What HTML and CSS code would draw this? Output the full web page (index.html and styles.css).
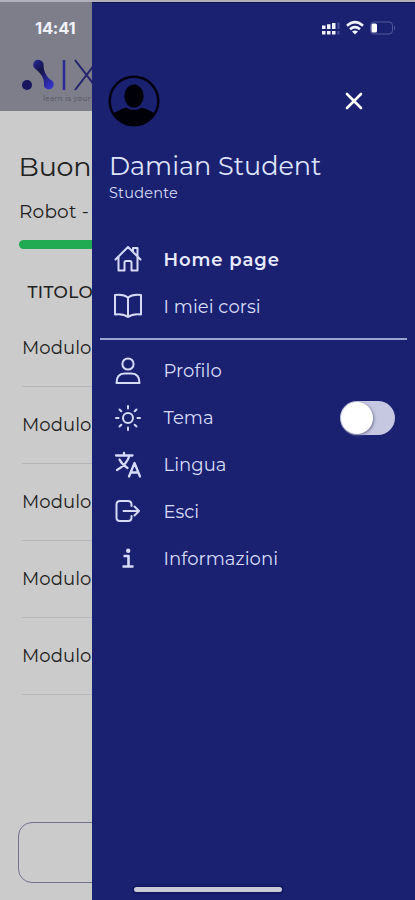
FILE: index.html
```html
<!DOCTYPE html>
<html lang="it">
<head>
<meta charset="utf-8">
<meta name="viewport" content="width=device-width">
<title>Menu</title>
<link rel="stylesheet" href="styles.css">
</head>
<body>
<div class="screen">
  <main class="page">
    <header class="page-header">
      <div class="clock">14:41</div>
      <svg class="logo" width="100" height="34" viewBox="0 0 100 34">
        <defs><linearGradient id="g" x1="0" y1="0" x2="0.7" y2="1"><stop offset="0" stop-color="#27269a"/><stop offset=".42" stop-color="#151449"/><stop offset="1" stop-color="#3432c4"/></linearGradient></defs>
        <circle cx="9" cy="27" r="5" fill="#17165f"/>
        <path d="M21.500 2A5 5 0 0 1 25.500 8Q26 16 32 21.500A5 5 0 1 1 26 28Q27 18 17.500 11A5 5 0 0 1 21.500 2Z" fill="url(#g)"/>
        <path d="M46 2V32" stroke="#2b2a94" stroke-width="2.500"/>
        <path d="M57 2L80 32M80 2L57 32" stroke="#24236f" stroke-width="2"/>
      </svg>
      <div class="tagline">learn is your</div>
    </header>
    <h1 class="greeting">Buon</h1>
    <p class="course">Robot -</p>
    <div class="progress"></div>
    <div class="table-head">TITOLO</div>
    <ul class="modules">
      <li>Modulo</li><li>Modulo</li><li>Modulo</li><li>Modulo</li><li>Modulo</li>
    </ul>
    <div class="action"></div>
  </main>
  <aside class="drawer">
    <div class="status">
      <svg width="75" height="18" viewBox="0 0 75 18">
        <g fill="#f1f2ff"><path d="M0 6.500h3.500v3.500H0zM5 5.300h3.500v4.700H5zM10 4h3.500v6H10zM0 12h3.500v3.500H0zM5 12h3.500v3.500H5zM10 12h3.500v3.500H10z"/></g>
        <path d="M15.500 3.500h2v6.500h-2zM15.500 12h2v3.500h-2z" fill="#4b529d"/>
        <path d="M25 6.700Q33 -.3 41 6.700M28 10.200Q33 6 38 10.200" fill="none" stroke="#f1f2ff" stroke-width="2.600"/>
        <path d="M30 12.500Q33 10.500 36 12.500L33 15.500Z" fill="#f1f2ff"/>
        <rect x="48.500" y="3" width="22" height="12" rx="3.500" fill="none" stroke="#5259a0"/>
        <rect x="49.500" y="4.500" width="5.500" height="9" rx="1.500" fill="#fff"/>
        <path d="M72 6.500q2 2.500 0 5z" fill="#5259a0"/>
      </svg>
    </div>
    <div class="drawer-top">
      <svg width="52" height="52" viewBox="0 0 52 52">
        <defs><clipPath id="a"><circle cx="26" cy="26" r="24.500"/></clipPath></defs>
        <circle cx="26" cy="26" r="24.300" fill="none" stroke="#000010" stroke-width="2.500"/>
        <g fill="#000008" clip-path="url(#a)"><ellipse cx="26" cy="21" rx="9.700" ry="11.500"/><path d="M3 40Q8 36 18 32.500Q26 37.500 34 32.500Q44 36 49 40V52H3Z"/></g>
      </svg>
      <svg class="close" width="20" height="20" viewBox="0 0 20 20"><path d="M3 3L17 17M17 3L3 17" stroke="#fff" stroke-width="2.600" stroke-linecap="round"/></svg>
    </div>
    <div class="name">Damian Student</div>
    <div class="role">Studente</div>
    <nav class="menu">
      <a class="item active"><svg viewBox="0 0 28 28"><path d="M1.500 14.500L14 2L26.500 14.500M4.500 12V25.500H10.500V17.500Q10.500 16 12 16H16Q17.500 16 17.500 17.500V25.500H23.500V12M19 6.500V3H23.500V11"/></svg><span>Home page</span></a>
      <a class="item"><svg viewBox="0 0 28 28"><path d="M14 5.500Q9.500 1.800 1 3V22.500Q9.500 21.500 14 25Q18.500 21.500 27 22.500V3Q18.500 1.800 14 5.500V24"/></svg><span>I miei corsi</span></a>
    </nav>
    <div class="divider"></div>
    <nav class="menu">
      <a class="item"><svg viewBox="0 0 28 28"><circle cx="14" cy="7" r="5.600"/><path d="M2.500 26Q2.500 16.500 10.500 16.500H17.500Q25.500 16.500 25.500 26Z"/></svg><span>Profilo</span></a>
      <div class="item"><svg viewBox="0 0 28 28"><circle cx="14" cy="14" r="5"/><path d="M14 2V4.500M14 23.500V26M2 14H4.500M23.500 14H26M5.500 5.500L7.300 7.300M20.700 20.700L22.500 22.500M22.500 5.500L20.700 7.300M7.300 20.700L5.500 22.500"/></svg><span>Tema</span><span class="toggle"><i></i></span></div>
      <a class="item"><svg viewBox="0 0 28 28"><path stroke-width="2.300" d="M2 4.500H18.500M10 2V4.500M15.500 4.500Q13 13.500 3 19M5.500 8.500Q8 13.500 13.500 17M15 25.500L20.500 12L26 25.500M17 21.500H24"/></svg><span>Lingua</span></a>
      <a class="item"><svg viewBox="0 0 28 28"><path d="M17.500 9V7.500Q17.500 4 14 4H6Q2.500 4 2.500 7.500V20.500Q2.500 24 6 24H14Q17.500 24 17.500 20.500V19M9.500 14H25M20.500 9.500L25 14L20.500 18.500"/></svg><span>Esci</span></a>
      <a class="item"><svg viewBox="0 0 28 28"><path d="M9.500 12H14.500V22.500M8.500 22.500H19.500" stroke-width="2.600" stroke-linecap="butt"/><circle class="dot" cx="14.200" cy="6.700" r="2.200"/></svg><span>Informazioni</span></a>
    </nav>
    <div class="home-bar"></div>
  </aside>
</div>
</body>
</html>
```
FILE: styles.css
```css
* { box-sizing: border-box; }
body { margin: 0; font-family: Montserrat, Inter, "Liberation Sans", sans-serif; background: #cacaca; }
.screen { display: flex; width: 415px; height: 900px; overflow: hidden; border-top: 2px solid #b0b0bb; }
.page { width: 92px; flex: none; overflow: hidden; background: #cbcbcb; color: #222; white-space: nowrap; }
.page-header { height: 109px; background: #7d7e8a; padding-top: 15px; }
.clock { margin-left: 35px; font: 700 16.5px/22px Inter, sans-serif; color: #f0f0fb; letter-spacing: -.2px; }
.logo { display: block; margin: 19px 0 0 18px; }
.tagline { margin: 2px 0 0 43px; font-size: 7px; line-height: 9px; letter-spacing: .45px; color: #51515f; }
.greeting { margin: 38px 0 0 18.500px; font-size: 27px; line-height: 36px; font-weight: 400; letter-spacing: -.2px; }
.course { margin: 15px 0 0 19px; font-size: 18.500px; line-height: 24px; letter-spacing: .2px; }
.progress { width: 374px; height: 9px; margin: 16px 0 0 19px; border-radius: 5px; background: #20aa51; }
.table-head { margin: 32px 0 0 27.500px; font-size: 17px; line-height: 22px; font-weight: 500; letter-spacing: .35px; }
.modules { list-style: none; margin: 7px 0 0 22px; padding: 0; width: 370px; }
.modules li { height: 77px; border-bottom: 1px solid #b6b6ba; font-size: 18px; line-height: 77px; letter-spacing: .1px; }
.action { width: 377px; height: 61px; margin: 127px 0 0 18px; border: 1.500px solid #73738f; border-radius: 14px; }
.drawer { flex: 1; display: flex; flex-direction: column; background: #1a2171; color: #d8dcf8; white-space: nowrap; border-top: 1px solid #11164f; }
.status { height: 36px; padding: 16px 18px 0 0; display: flex; justify-content: flex-end; }
.status svg { flex: none; }
.drawer-top { height: 52px; margin: 36px 50px 0 16px; display: flex; align-items: center; justify-content: space-between; }
.close { margin-right: 1px; }
.name { margin: 21px 0 0 17px; font-size: 25.500px; line-height: 36px; font-weight: 400; color: #dfe3fc; letter-spacing: 0; }
.role { margin: -1px 0 0 17px; font-size: 14.500px; line-height: 20px; letter-spacing: .2px; }
.menu { display: grid; grid-auto-rows: 46.800px; }
.role + .menu { margin-top: 33px; }
.item { display: flex; align-items: center; padding: 0 20px 0 22px; font-size: 18px; letter-spacing: .05px; }
.item span:not(.toggle) { padding-top: 1px; }
.item svg { width: 28px; height: 28px; flex: none; margin-right: 21.500px; fill: none; stroke: #d6dbf8; stroke-width: 2; stroke-linecap: round; stroke-linejoin: round; }
.item .dot { fill: #d6dbf8; stroke: none; }
.active { font-weight: 600; color: #e8ebff; letter-spacing: .9px; }
.divider { height: 2px; margin: 8px 8px 8px; background: #9da4d3; }
.toggle { width: 55px; height: 34px; margin-left: auto; border-radius: 17px; background: #c6c8e1; display: flex; align-items: center; }
.toggle i { width: 32px; height: 32px; margin-left: 1px; border-radius: 50%; background: #fff; box-shadow: 1px 1px 3px #74769a; }
.home-bar { width: 148px; height: 5px; margin: auto 0 8px 42px; border-radius: 3px; background: #cbcbd8; box-shadow: 0 0 2px 1px #0e1254; }
```
